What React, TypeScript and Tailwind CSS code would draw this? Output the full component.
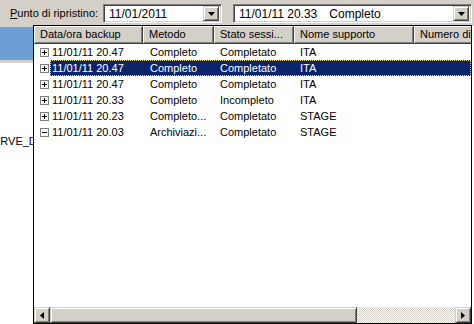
import React from 'react';

const raised =
  'border border-t-[#d4d0c8] border-l-[#d4d0c8] border-r-[#404040] border-b-[#404040] shadow-[inset_1px_1px_#ffffff,inset_-1px_-1px_#808080]';
const sunken =
  'border border-t-[#808080] border-l-[#808080] border-r-white border-b-white shadow-[inset_1px_1px_#404040,inset_-1px_-1px_#d4d0c8]';

interface Row {
  date: string;
  method: string;
  state: string;
  media: string;
  expanded?: boolean;
  selected?: boolean;
}

const rows: Row[] = [
  { date: '11/01/11 20.47', method: 'Completo', state: 'Completato', media: 'ITA' },
  { date: '11/01/11 20.47', method: 'Completo', state: 'Completato', media: 'ITA', selected: true },
  { date: '11/01/11 20.47', method: 'Completo', state: 'Completato', media: 'ITA' },
  { date: '11/01/11 20.33', method: 'Completo', state: 'Incompleto', media: 'ITA' },
  { date: '11/01/11 20.23', method: 'Completo...', state: 'Completato', media: 'STAGE' },
  { date: '11/01/11 20.03', method: 'Archiviazi...', state: 'Completato', media: 'STAGE', expanded: true },
];

const columns = [
  { label: 'Data/ora backup', w: 'w-[109px]' },
  { label: 'Metodo', w: 'w-[71px]' },
  { label: 'Stato sessi...', w: 'w-[80px]' },
  { label: 'Nome supporto', w: 'w-[120px]' },
  { label: 'Numero di sessione', w: 'w-[90px]' },
];

const TreeBox = ({ open }: { open?: boolean }) => (
  <svg width="9" height="9" viewBox="0 0 9 9" className="block">
    <rect x="0.5" y="0.5" width="8" height="8" fill="white" stroke="#808080" />
    <line x1="2" y1="4.5" x2="7" y2="4.5" stroke="black" />
    {!open && <line x1="4.5" y1="2" x2="4.5" y2="7" stroke="black" />}
  </svg>
);

const DropButton = () => (
  <div className={`w-[16px] h-[15px] flex items-center justify-center bg-[#d4d0c8] ${raised}`}>
    <svg width="7" height="4" viewBox="0 0 7 4">
      <path d="M0 0h7L3.5 4z" fill="black" />
    </svg>
  </div>
);

const ScrollArrow = ({ dir }: { dir: 'left' | 'right' }) => (
  <div className={`w-[16px] h-[16px] flex items-center justify-center bg-[#d4d0c8] ${raised}`}>
    <svg width="4" height="7" viewBox="0 0 4 7">
      <path d={dir === 'left' ? 'M4 0v7L0 3.5z' : 'M0 0v7l4-3.5z'} fill="black" />
    </svg>
  </div>
);

export default function App() {
  return (
    <div className="w-[474px] h-[324px] relative overflow-hidden bg-[#d4d0c8] font-['Liberation_Sans',Arial,sans-serif] text-[11px] text-black leading-none">
      {/* toolbar */}
      <div className="flex items-start h-[26px] pt-[4px] pl-[10px]">
        <div className="w-[93px] h-[19px] flex items-center">
          <span>
            <span className="underline">P</span>unto di ripristino:
          </span>
        </div>
        <div className={`w-[119px] h-[19px] bg-white flex items-center justify-between pl-[5px] pr-[2px] ${sunken}`}>
          <span className="text-[12px]">11/01/2011</span>
          <DropButton />
        </div>
        <div className={`ml-[11px] w-[239px] h-[19px] bg-white flex items-center justify-between pl-[5px] pr-[2px] ${sunken}`}>
          <span className="text-[12px]">
            11/01/11 20.33<span className="ml-[12px]">Completo</span>
          </span>
          <DropButton />
        </div>
      </div>

      {/* content behind the dropdown */}
      <div className="flex h-[298px]">
        <div className="w-[33px] flex flex-col">
          <div className="h-[1px]" />
          <div className="h-[33px] bg-[#6c9fd3]" />
          <div className="h-[3px] bg-[#d4d0c8]" />
          <div className="flex-1 bg-white overflow-hidden">
            <div className="mt-[73px] ml-[-7px] whitespace-nowrap">ERVE_DB</div>
          </div>
        </div>
        <div className="flex-1 bg-white" />
      </div>

      {/* dropdown list */}
      <div className="absolute left-[33px] top-[25px] w-[439px] h-[299px] bg-white border border-black flex flex-col overflow-hidden">
        <div className="flex h-[18px] shrink-0 bg-[#d4d0c8] whitespace-nowrap">
          {columns.map((c) => (
            <div
              key={c.label}
              className={`${c.w} shrink-0 h-full flex items-center pl-[6px] border-r border-b border-[#404040] shadow-[inset_1px_1px_#ffffff,inset_-1px_-1px_#808080] overflow-hidden`}
            >
              {c.label}
            </div>
          ))}
        </div>

        <div className="flex-1">
          {rows.map((r, i) => (
            <div key={i} className="flex h-[16px] whitespace-nowrap">
              <div className="w-[16px] shrink-0 flex items-center pl-[6px]">
                <TreeBox open={r.expanded} />
              </div>
              <div
                className={`flex flex-1 items-center ${
                  r.selected
                    ? 'bg-[#0a246a] text-white outline-1 outline-dotted outline-[#e8d890] -outline-offset-1'
                    : ''
                }`}
              >
                <div className="w-[93px] shrink-0 pl-[2px]">{r.date}</div>
                <div className="w-[71px] shrink-0 pl-[7px]">{r.method}</div>
                <div className="w-[80px] shrink-0 pl-[6px]">{r.state}</div>
                <div className="w-[120px] shrink-0 pl-[6px]">{r.media}</div>
              </div>
            </div>
          ))}
        </div>

        {/* horizontal scrollbar */}
        <div className="flex h-[16px] shrink-0">
          <ScrollArrow dir="left" />
          <div className={`w-[307px] h-[16px] bg-[#d4d0c8] ${raised}`} />
          <div className="flex-1 h-[16px] bg-[repeating-conic-gradient(#ffffff_0_25%,#d4d0c8_0_50%)] bg-[length:2px_2px]" />
          <ScrollArrow dir="right" />
        </div>
      </div>
    </div>
  );
}
